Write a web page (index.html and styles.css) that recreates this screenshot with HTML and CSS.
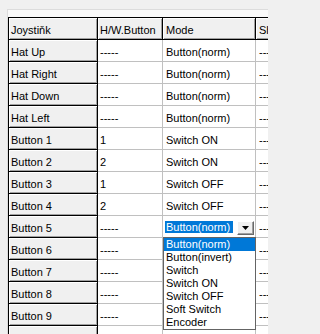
FILE: index.html
```html
<!DOCTYPE html>
<html>
<head>
<meta charset="utf-8">
<link rel="stylesheet" href="styles.css">
</head>
<body>
<div class="frame">
  <div class="grid">
    <div class="row"><div class="c c0 fx">Joystiňk</div><div class="c c1 fx">H/W.Button</div><div class="c c2 fx">Mode</div><div class="c c3 fx">Sh</div></div>
    <div class="row"><div class="c c0 fx">Hat Up</div><div class="c c1">-----</div><div class="c c2">Button(norm)</div><div class="c c3">-----</div></div>
    <div class="row"><div class="c c0 fx">Hat Right</div><div class="c c1">-----</div><div class="c c2">Button(norm)</div><div class="c c3">-----</div></div>
    <div class="row"><div class="c c0 fx">Hat Down</div><div class="c c1">-----</div><div class="c c2">Button(norm)</div><div class="c c3">-----</div></div>
    <div class="row"><div class="c c0 fx">Hat Left</div><div class="c c1">-----</div><div class="c c2">Button(norm)</div><div class="c c3">-----</div></div>
    <div class="row"><div class="c c0 fx">Button 1</div><div class="c c1">1</div><div class="c c2">Switch ON</div><div class="c c3">-----</div></div>
    <div class="row"><div class="c c0 fx">Button 2</div><div class="c c1">2</div><div class="c c2">Switch ON</div><div class="c c3">-----</div></div>
    <div class="row"><div class="c c0 fx">Button 3</div><div class="c c1">1</div><div class="c c2">Switch OFF</div><div class="c c3">-----</div></div>
    <div class="row"><div class="c c0 fx">Button 4</div><div class="c c1">2</div><div class="c c2">Switch OFF</div><div class="c c3">-----</div></div>
    <div class="row"><div class="c c0 fx">Button 5</div><div class="c c1">-----</div>
      <div class="c c2 editing">
        <div class="combo">
          <span class="combo-text">Button(norm)</span>
          <span class="combo-btn"><svg width="7" height="4" viewBox="0 0 7 4"><polygon points="0,0 7,0 3.5,4" fill="#000"/></svg></span>
        </div>
        <ul class="list">
          <li class="sel">Button(norm)</li>
          <li>Button(invert)</li>
          <li>Switch</li>
          <li>Switch ON</li>
          <li>Switch OFF</li>
          <li>Soft Switch</li>
          <li>Encoder</li>
        </ul>
      </div>
      <div class="c c3">-----</div></div>
    <div class="row"><div class="c c0 fx">Button 6</div><div class="c c1">-----</div><div class="c c2"></div><div class="c c3">-----</div></div>
    <div class="row"><div class="c c0 fx">Button 7</div><div class="c c1">-----</div><div class="c c2"></div><div class="c c3">-----</div></div>
    <div class="row"><div class="c c0 fx">Button 8</div><div class="c c1">-----</div><div class="c c2"></div><div class="c c3">-----</div></div>
    <div class="row"><div class="c c0 fx">Button 9</div><div class="c c1">-----</div><div class="c c2"></div><div class="c c3">-----</div></div>
    <div class="row"><div class="c c0 fx">Button 10</div><div class="c c1">-----</div><div class="c c2">Button(norm)</div><div class="c c3">-----</div></div>
  </div>
</div>
</body>
</html>
```

FILE: styles.css
```css
html, body {
  margin: 0;
  padding: 0;
  width: 268px;
  height: 334px;
  overflow: hidden;
  background: #f0f0f0;
  font-family: "Liberation Sans", Arial, sans-serif;
  font-size: 11px;
  color: #000;
}

.frame {
  margin-top: 9px;
  margin-left: 7px;
  border-top: 1px solid #dcdcdc;
  border-left: 1px solid #dcdcdc;
  background: #fafafa;
  padding-top: 7px;
  height: 400px;
}

.grid {
  border-top: 1px solid #000;
  border-left: 1px solid #000;
  width: 400px;
}

.row {
  display: flex;
}

.c {
  box-sizing: border-box;
  height: 22px;
  flex: none;
  border-right: 1px solid #c0c0c0;
  border-bottom: 1px solid #c0c0c0;
  background: #fff;
  padding: 6px 0 0 2px;
  line-height: 13px;
  white-space: nowrap;
  overflow: hidden;
}

.c0 { width: 89px; }
.c1 { width: 65px; }
.c2 { width: 93px; padding-left: 3px; }
.c3 { width: 80px; padding-left: 3px; }

.fx {
  background: #f0f0f0;
  border-right-color: #000;
  border-bottom-color: #000;
  box-shadow: inset 1px 1px #fff, inset -1px -1px #a0a0a0;
}

.editing {
  position: relative;
  overflow: visible;
  padding: 0;
}

.combo {
  box-sizing: border-box;
  height: 21px;
  width: 92px;
  padding: 5px 1px 0 2px;
  background: #fff;
  display: flex;
  align-items: flex-start;
  gap: 4px;
}

.combo-text {
  flex: none;
  width: 68px;
  height: 12px;
  box-sizing: border-box;
  background: #0078d7;
  color: #fff;
  line-height: 12px;
  padding-left: 1px;
}

.combo-btn {
  flex: none;
  width: 17px;
  height: 14px;
  box-sizing: border-box;
  background: #f0f0f0;
  border-top: 1px solid #fff;
  border-left: 1px solid #fff;
  border-right: 1px solid #696969;
  border-bottom: 1px solid #696969;
  box-shadow: inset -1px -1px #a0a0a0;
  display: flex;
  align-items: center;
  justify-content: center;
}

.combo-btn svg {
  display: block;
}

.list {
  position: absolute;
  left: 0;
  top: 21px;
  width: 93px;
  box-sizing: border-box;
  margin: 0;
  padding: 0;
  list-style: none;
  background: #fff;
  border: 1px solid #646464;
  z-index: 2;
}

.list li {
  height: 13px;
  line-height: 13px;
  padding-left: 2px;
  white-space: nowrap;
}

.list li.sel {
  background: #0078d7;
  color: #fff;
}
```
